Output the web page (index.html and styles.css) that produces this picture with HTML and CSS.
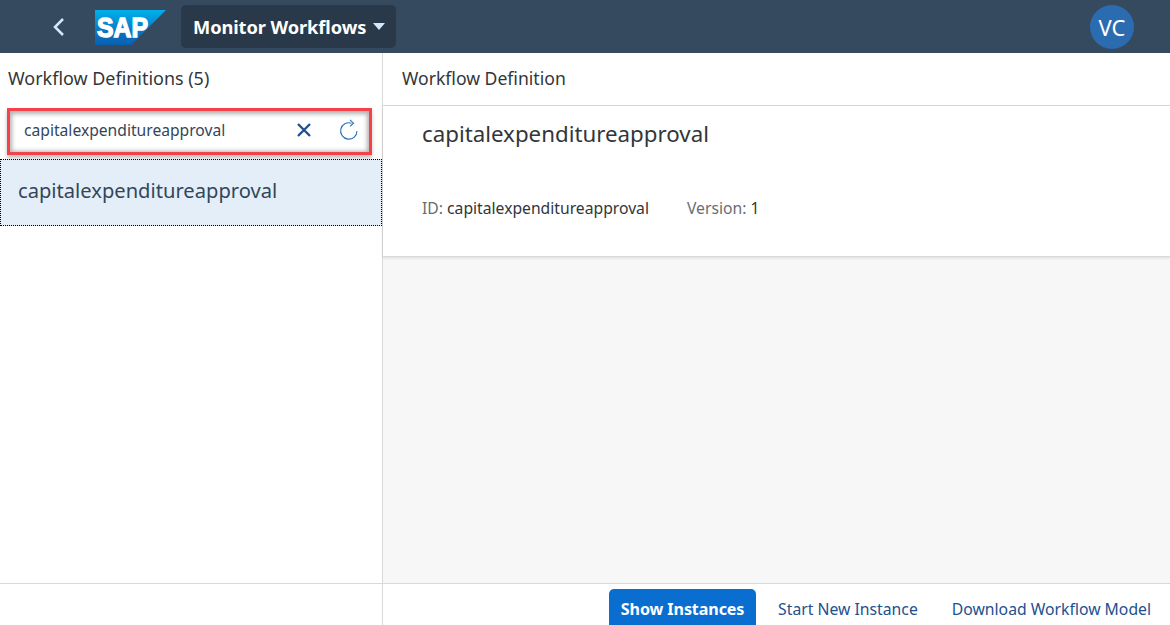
FILE: index.html
```html
<!DOCTYPE html>
<html lang="en">
<head>
<meta charset="utf-8">
<title>Monitor Workflows</title>
<link rel="stylesheet" href="styles.css">
</head>
<body>
<div class="app">
  <header class="shell">
    <button class="back" aria-label="Back">
      <svg width="14" height="20" viewBox="0 0 14 20"><path d="M11 2 L3 10 L11 18" fill="none" stroke="#d1e8ff" stroke-width="2.5"/></svg>
    </button>
    <svg class="logo" width="72" height="36" viewBox="0 0 72 36">
      <defs><linearGradient id="sapg" x1="0" y1="0" x2="0" y2="1"><stop offset="0" stop-color="#00b1eb"/><stop offset="0.6" stop-color="#0a76c4"/><stop offset="1" stop-color="#0a5fb0"/></linearGradient></defs>
      <polygon points="0,0 71,0 36,35 0,35" fill="url(#sapg)"/>
      <text x="2" y="27" class="logo-text" textLength="51" lengthAdjust="spacingAndGlyphs">SAP</text>
    </svg>
    <button class="title-btn">Monitor Workflows<span class="caret"></span></button>
    <div class="spacer"></div>
    <div class="avatar">VC</div>
  </header>
  <div class="panes">
    <aside class="master">
      <div class="master-head">Workflow Definitions (5)</div>
      <div class="search">
        <span class="search-text">capitalexpenditureapproval</span>
        <svg class="icon-x" width="16" height="16" viewBox="0 0 16 16"><path d="M2 2 L14 14 M14 2 L2 14" stroke="#21508f" stroke-width="2.4" fill="none"/></svg>
        <svg class="icon-refresh" width="20" height="22" viewBox="0 0 20 22"><path d="M12.5 4.2 A8.2 8.2 0 1 0 18 12" stroke="#2a72b8" stroke-width="1.1" fill="none"/><path d="M11 .8 L14.5 4.2 L11 7.4" stroke="#2a72b8" stroke-width="1.1" fill="none"/></svg>
      </div>
      <div class="list-item">capitalexpenditureapproval</div>
    </aside>
    <main class="detail">
      <div class="detail-head">Workflow Definition</div>
      <section class="object">
        <h1 class="object-title">capitalexpenditureapproval</h1>
        <div class="attrs">
          <span class="attr"><span class="label">ID:</span> capitalexpenditureapproval</span>
          <span class="attr"><span class="label">Version:</span> 1</span>
        </div>
      </section>
      <div class="canvas"></div>
    </main>
  </div>
  <footer class="footer">
    <div class="footer-left"></div>
    <div class="footer-right">
      <button class="primary">Show Instances</button>
      <button class="link">Start New Instance</button>
      <button class="link">Download Workflow Model</button>
    </div>
  </footer>
</div>
</body>
</html>
```
FILE: styles.css
```css
* { box-sizing: border-box; }
html, body { margin: 0; height: 100%; overflow: hidden; }
body { font-family: "Noto Sans", "Open Sans", sans-serif; color: #32363a; background: #fff; }
button { font: inherit; border: 0; background: none; padding: 0; }
.app { display: flex; flex-direction: column; height: 625px; overflow: hidden; }

.shell { height: 53px; flex: none; background: #354a5f; display: flex; align-items: center; padding-left: 52px; padding-right: 36px; }
.back { width: 14px; height: 20px; display: flex; margin-right: 29px; }
.logo { display: block; margin-right: 14px; margin-top: 2px; }
.logo-text { font-family: "Liberation Sans", sans-serif; font-weight: 700; font-size: 27px; fill: #fff; stroke: #fff; stroke-width: 1.4px; }
.title-btn { height: 43px; width: 215px; margin-bottom: 1px; background: #29394a; border-radius: 5px; color: #fff; font-weight: 700; font-size: 18.3px; letter-spacing: -.1px; display: flex; align-items: center; padding-left: 12px; white-space: nowrap; }
.caret { width: 0; height: 0; margin-left: 7px; border-left: 6px solid transparent; border-right: 6px solid transparent; border-top: 7px solid #d1e8ff; }
.spacer { flex: 1; }
.avatar { width: 44px; height: 44px; border-radius: 50%; background: #2b6cb0; color: #fff; font-size: 22px; display: flex; align-items: center; justify-content: center; }

.panes { flex: 1; display: flex; min-height: 0; }
.master { width: 383px; flex: none; border-right: 1px solid #d9d9d9; background: #fff; display: flex; flex-direction: column; }
.master-head { height: 55px; padding: 13px 0 0 8px; font-size: 17.95px; line-height: 24px; }
.search { height: 47px; width: 365px; margin-left: 7px; border: 3px solid #f4414a; box-shadow: 0 1px 4px 2px rgba(0,0,0,.3) inset, 0 3px 4px rgba(0,0,0,.25); display: flex; align-items: center; padding-left: 14px; padding-bottom: 3px; }
.search-text { flex: 1; font-size: 15.65px; color: #32465a; }
.icon-x { margin-right: 27px; }
.icon-refresh { margin-right: 10px; }
.list-item { margin-top: 4px; height: 67px; border: 1px dotted #000; background: #e4eef8; padding-left: 17px; font-size: 20.15px; line-height: 61px; color: #32465a; }

.detail { flex: 1; min-width: 0; display: flex; flex-direction: column; }
.detail-head { height: 53px; padding: 13px 0 0 19px; font-size: 17.6px; line-height: 24px; border-bottom: 1px solid #d9d9d9; }
.object { height: 151px; border-bottom: 1px solid #d9d9d9; box-shadow: 0 1px 3px rgba(0,0,0,.12); padding: 10px 0 0 39px; position: relative; }
.object-title { margin: 0; font-weight: 400; font-size: 22.3px; line-height: 36px; }
.attrs { display: flex; gap: 38px; margin-top: 45px; font-size: 15.7px; line-height: 22px; }
.label { color: #6a6d70; }
.canvas { flex: 1; background: #f7f7f7; }

.footer { height: 42px; flex: none; display: flex; border-top: 1px solid #d9d9d9; }
.footer-left { width: 383px; flex: none; border-right: 1px solid #d9d9d9; }
.footer-right { flex: 1; display: flex; justify-content: flex-end; padding-right: 19px; padding-top: 5px; }
.primary { width: 147px; height: 44px; background: #0a6ed1; color: #fff; font-weight: 700; font-size: 16.1px; border-radius: 5px 5px 0 0; padding-bottom: 5px; margin-right: 22px; letter-spacing: -.1px; }
.link { color: #21508f; font-size: 15.74px; height: 40px; white-space: nowrap; }
.link + .link { margin-left: 34px; }
```
